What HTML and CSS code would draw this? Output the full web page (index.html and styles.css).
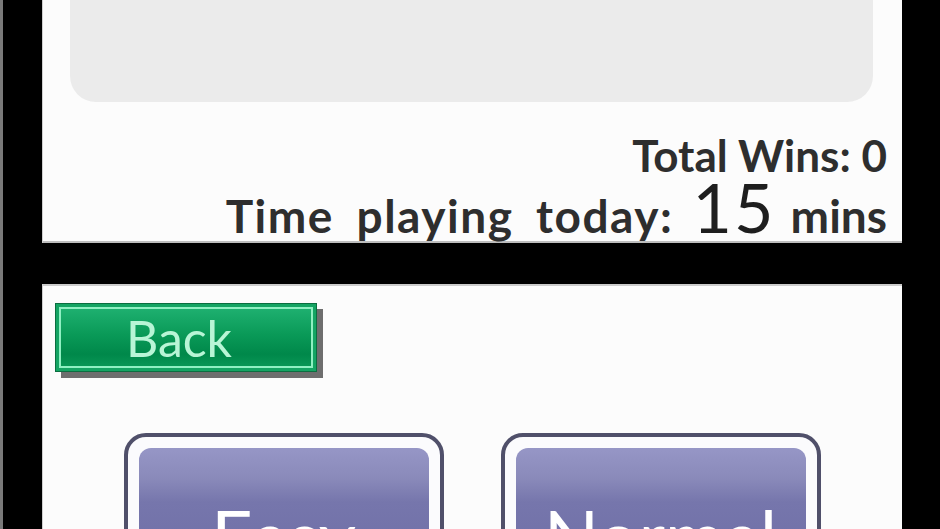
FILE: index.html
```html
<!DOCTYPE html>
<html lang="en">
<head>
<meta charset="utf-8">
<title>Stats</title>
<link rel="stylesheet" href="styles.css">
</head>
<body>
<div class="device">
  <section class="screen screen-top">
    <div class="panel"></div>
    <div class="stats">
      <div class="stat-line wins">Total Wins: 0</div>
      <div class="stat-line time"><span class="label">Time playing today:</span> <span class="big">15</span> mins</div>
    </div>
  </section>
  <section class="screen screen-bottom">
    <div class="back-row">
      <button class="back-btn">Back</button>
    </div>
    <div class="mode-row">
      <button class="mode-btn"><span class="mode-face">Easy</span></button>
      <button class="mode-btn"><span class="mode-face">Normal</span></button>
    </div>
  </section>
</div>
</body>
</html>
```

FILE: styles.css
```css
html, body {
  margin: 0;
  padding: 0;
  background: #000;
  width: 940px;
  height: 529px;
  overflow: hidden;
}

.device {
  width: 940px;
  height: 529px;
  box-sizing: border-box;
  border-left: 3px solid #7a7a7a;
  padding-left: 39px;
  display: flex;
  flex-direction: column;
  gap: 41px;
  font-family: Lato, "Open Sans", sans-serif;
}

.screen {
  width: 860px;
  background: #fcfcfc;
  overflow: hidden;
  flex: none;
  box-shadow: inset 1px 0 0 #cfcfcf;
}

.screen-top {
  height: 243px;
  box-shadow: inset 1px 0 0 #cfcfcf, inset 0 -2px 0 #bdbdbd;
}

.screen-bottom {
  height: 245px;
  box-shadow: inset 1px 0 0 #cfcfcf, inset 0 2px 0 #cccccc;
}

.panel {
  height: 102px;
  margin: 0 29px 0 28px;
  background: #ebebeb;
  border-radius: 0 0 26px 26px;
}

.stats {
  margin-top: 26px;
  padding-right: 15px;
  text-align: right;
  color: #2e2e2e;
  font-weight: 700;
  font-size: 44px;
  white-space: nowrap;
}

.stat-line {
  line-height: 55px;
}

.stat-line.time {
  line-height: 65px;
  font-size: 46px;
}

.label {
  word-spacing: 10px;
  letter-spacing: 1.5px;
}

.big {
  font-size: 68px;
  font-weight: 400;
  line-height: 0;
  color: #1e1e1e;
  letter-spacing: 2px;
  margin: 0 4px 0 8px;
}

.back-row {
  padding: 19px 0 0 13px;
}

.back-btn {
  display: block;
  width: 262px;
  height: 69px;
  padding: 0;
  border: 1px solid #0b6e40;
  background: linear-gradient(#22b474 0%, #0a9a58 45%, #00884a 75%, #0c9c5a 100%);
  box-shadow: 6px 6px 0 #6e6e6e, inset 0 0 0 3px #14a463, inset 0 0 0 5px #8ff0c2;
  color: #b8f5d6;
  font-family: Lato, "Open Sans", sans-serif;
  font-size: 50px;
  font-weight: 400;
  line-height: 64px;
  text-align: center;
  padding-right: 14px;
}

.mode-row {
  margin-top: 61px;
  display: flex;
  justify-content: center;
  gap: 57px;
}

.mode-btn {
  flex: none;
  width: 320px;
  height: 150px;
  box-sizing: border-box;
  padding: 11px;
  border: 4px solid #50506a;
  border-radius: 22px;
  background: #fbfbfd;
  display: flex;
}

.mode-face {
  flex: 1;
  border-radius: 12px;
  background: linear-gradient(#9696c6 0%, #8a8aba 25%, #7676ac 45%, #6e6ea6 100%);
  color: #ffffff;
  font-family: Lato, "Open Sans", sans-serif;
  font-size: 72px;
  font-weight: 400;
  line-height: 1;
  padding-top: 51px;
  text-align: center;
}
```
